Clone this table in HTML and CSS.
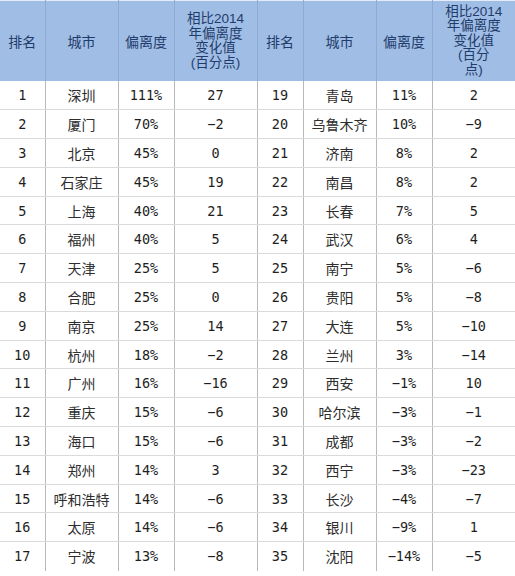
FILE: index.html
```html
<!DOCTYPE html>
<html lang="zh">
<head>
<meta charset="utf-8">
<link rel="stylesheet" href="styles.css">
</head>
<body>
<table class="rank">
<colgroup>
<col class="c-rank"><col class="c-city"><col class="c-pct"><col class="c-chg">
<col class="c-rank2"><col class="c-city"><col class="c-pct"><col class="c-chg">
</colgroup>
<thead>
<tr>
<th>排名</th><th>城市</th><th>偏离度</th><th class="hl">相比2014<br>年偏离度<br>变化值<br>(百分点)</th>
<th>排名</th><th>城市</th><th>偏离度</th><th class="hl">相比2014<br>年偏离度<br>变化值<br>(百分<br>点)</th>
</tr>
</thead>
<tbody>
<tr><td class="n">1</td><td>深圳</td><td class="n">111%</td><td class="n">27</td><td class="n">19</td><td>青岛</td><td class="n">11%</td><td class="n">2</td></tr>
<tr><td class="n">2</td><td>厦门</td><td class="n">70%</td><td class="n">−2</td><td class="n">20</td><td>乌鲁木齐</td><td class="n">10%</td><td class="n">−9</td></tr>
<tr><td class="n">3</td><td>北京</td><td class="n">45%</td><td class="n">0</td><td class="n">21</td><td>济南</td><td class="n">8%</td><td class="n">2</td></tr>
<tr><td class="n">4</td><td>石家庄</td><td class="n">45%</td><td class="n">19</td><td class="n">22</td><td>南昌</td><td class="n">8%</td><td class="n">2</td></tr>
<tr><td class="n">5</td><td>上海</td><td class="n">40%</td><td class="n">21</td><td class="n">23</td><td>长春</td><td class="n">7%</td><td class="n">5</td></tr>
<tr><td class="n">6</td><td>福州</td><td class="n">40%</td><td class="n">5</td><td class="n">24</td><td>武汉</td><td class="n">6%</td><td class="n">4</td></tr>
<tr><td class="n">7</td><td>天津</td><td class="n">25%</td><td class="n">5</td><td class="n">25</td><td>南宁</td><td class="n">5%</td><td class="n">−6</td></tr>
<tr><td class="n">8</td><td>合肥</td><td class="n">25%</td><td class="n">0</td><td class="n">26</td><td>贵阳</td><td class="n">5%</td><td class="n">−8</td></tr>
<tr><td class="n">9</td><td>南京</td><td class="n">25%</td><td class="n">14</td><td class="n">27</td><td>大连</td><td class="n">5%</td><td class="n">−10</td></tr>
<tr><td class="n">10</td><td>杭州</td><td class="n">18%</td><td class="n">−2</td><td class="n">28</td><td>兰州</td><td class="n">3%</td><td class="n">−14</td></tr>
<tr><td class="n">11</td><td>广州</td><td class="n">16%</td><td class="n">−16</td><td class="n">29</td><td>西安</td><td class="n">−1%</td><td class="n">10</td></tr>
<tr><td class="n">12</td><td>重庆</td><td class="n">15%</td><td class="n">−6</td><td class="n">30</td><td>哈尔滨</td><td class="n">−3%</td><td class="n">−1</td></tr>
<tr><td class="n">13</td><td>海口</td><td class="n">15%</td><td class="n">−6</td><td class="n">31</td><td>成都</td><td class="n">−3%</td><td class="n">−2</td></tr>
<tr><td class="n">14</td><td>郑州</td><td class="n">14%</td><td class="n">3</td><td class="n">32</td><td>西宁</td><td class="n">−3%</td><td class="n">−23</td></tr>
<tr><td class="n">15</td><td>呼和浩特</td><td class="n">14%</td><td class="n">−6</td><td class="n">33</td><td>长沙</td><td class="n">−4%</td><td class="n">−7</td></tr>
<tr><td class="n">16</td><td>太原</td><td class="n">14%</td><td class="n">−6</td><td class="n">34</td><td>银川</td><td class="n">−9%</td><td class="n">1</td></tr>
<tr><td class="n">17</td><td>宁波</td><td class="n">13%</td><td class="n">−8</td><td class="n">35</td><td>沈阳</td><td class="n">−14%</td><td class="n">−5</td></tr>
</tbody>
</table>
</body>
</html>
```
FILE: styles.css
```css
html, body {
  margin: 0;
  padding: 0;
  background: #ffffff;
}

body {
  font-family: "Noto Sans CJK SC", "Noto Sans", sans-serif;
  color: #2e2e2e;
}

.rank {
  width: 515px;
  table-layout: fixed;
  border-collapse: collapse;
  border-spacing: 0;
}

.c-rank { width: 45px; }
.c-city { width: 73px; }
.c-pct { width: 56px; }
.c-chg { width: 83px; }
.c-rank2 { width: 46px; }

.rank th {
  height: 80px;
  padding: 0;
  background: #9fbde5;
  color: #1f3c6b;
  font-size: 14px;
  font-weight: normal;
  line-height: 16px;
  text-align: center;
  vertical-align: middle;
  border-top: 1px solid #e4ecf7;
  border-left: 1px solid #8eabd6;
  border-right: 1px solid #8eabd6;
}

.rank th:first-child { border-left: none; }
.rank th:last-child { border-right: none; }

.rank th.hl {
  font-family: "Liberation Sans", "Noto Sans CJK SC", sans-serif;
  font-size: 13.5px;
  line-height: 14.5px;
}

.rank td {
  height: 28.8px;
  padding: 0;
  box-sizing: border-box;
  text-align: center;
  vertical-align: middle;
  font-size: 14px;
  line-height: 16px;
  border-bottom: 1px solid #dadada;
  border-left: 1px solid #b8b8b8;
  border-right: 1px solid #b8b8b8;
  white-space: nowrap;
}

.rank td:first-child { border-left: none; }
.rank td:last-child { border-right: none; }

.rank tbody tr:last-child td { border-bottom: none; }

.rank td.n {
  font-family: "DejaVu Sans Mono", "Liberation Mono", monospace;
  font-size: 13.5px;
  color: #1e1e1e;
}
```
